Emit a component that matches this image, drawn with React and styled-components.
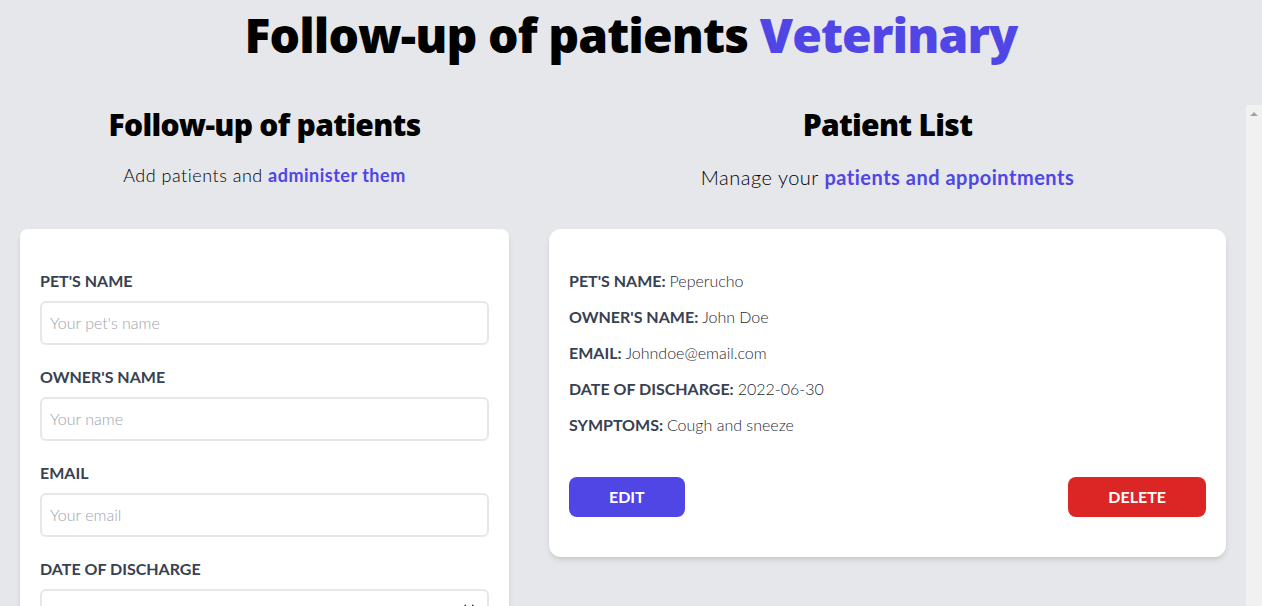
import React, { useState } from "react";
import styled, { createGlobalStyle } from "styled-components";

const GlobalStyle = createGlobalStyle`
	* {
		box-sizing: border-box;
	}

	html,
	body {
		margin: 0;
		padding: 0;
		height: 100%;
		overflow: hidden;
		background-color: #e5e7eb;
		font-family: Lato, "Liberation Sans", sans-serif;
	}
`;

const Page = styled.div`
	padding-top: 11px;
`;

const Title = styled.h1`
	margin: 0 auto;
	font-family: "Open Sans", Lato, sans-serif;
	font-size: 48px;
	line-height: 48px;
	font-weight: 800;
	letter-spacing: -0.9px;
	text-align: center;
	color: #000;
`;

const Accent = styled.span`
	color: #4f46e5;
	font-weight: ${props => (props.bold ? 700 : "inherit")};
`;

const Columns = styled.div`
	display: flex;
	margin-top: 46px;
`;

const FormColumn = styled.div`
	width: 529px;
	flex-shrink: 0;
`;

const ListColumn = styled.div`
	flex: 1;
	display: flex;
	height: 100vh;
`;

const ListBody = styled.div`
	flex: 1;
	min-width: 0;
`;

const ScrollTrack = styled.div`
	width: 16px;
	flex-shrink: 0;
	background-color: #f1f1f1;
	padding-top: 7px;
`;

const ArrowUp = styled.div`
	width: 0;
	height: 0;
	margin: 0 auto;
	border-left: 4px solid transparent;
	border-right: 4px solid transparent;
	border-bottom: 4px solid #a3a3a3;
`;

const Heading = styled.h2`
	margin: 0;
	padding-top: 2px;
	font-family: "Open Sans", Lato, sans-serif;
	font-size: 30px;
	line-height: 36px;
	font-weight: 800;
	letter-spacing: -0.7px;
	text-align: center;
	color: #000;
`;

const Subtitle = styled.p`
	margin: ${props => (props.large ? "20px 0 38px" : "18px 0 40px")};
	font-size: ${props => (props.large ? "20px" : "18px")};
	line-height: 28px;
	font-weight: 300;
	letter-spacing: 0.5px;
	text-align: center;
	color: #000;
`;

const Card = styled.div`
	margin: 0 20px 40px;
	padding: 40px 20px;
	background: #fff;
	border-radius: ${props => (props.round ? "12px" : "8px")};
	box-shadow: 0 4px 6px -1px rgba(0, 0, 0, 0.1),
		0 2px 4px -2px rgba(0, 0, 0, 0.1);
`;

const Field = styled.div`
	margin-bottom: 20px;
`;

const Label = styled.label`
	display: block;
	font-size: 16px;
	line-height: 24px;
	font-weight: 700;
	text-transform: uppercase;
	color: #374151;
`;

const Input = styled.input`
	display: block;
	width: 100%;
	margin-top: 8px;
	padding: 8px;
	border: 2px solid #e5e7eb;
	border-radius: 6px;
	font-family: inherit;
	font-size: 16px;
	line-height: 24px;
	font-weight: 300;
	color: #374151;
	outline: none;

	&::placeholder {
		color: #9ca3af;
	}
`;

const Line = styled.p`
	margin: 0 0 12px;
	font-size: 16px;
	line-height: 24px;
	font-weight: 700;
	text-transform: uppercase;
	color: #374151;
`;

const Value = styled.span`
	font-weight: 300;
	text-transform: none;
	color: #1f2937;
`;

const Actions = styled.div`
	display: flex;
	justify-content: space-between;
	margin-top: 40px;
`;

const Button = styled.button`
	padding: 8px 40px;
	border: none;
	border-radius: 8px;
	background-color: ${props => (props.danger ? "#dc2626" : "#4f46e5")};
	font-family: inherit;
	font-size: 16px;
	line-height: 24px;
	font-weight: 700;
	text-transform: uppercase;
	color: #fff;
	cursor: pointer;

	&:hover {
		background-color: ${props => (props.danger ? "#b91c1c" : "#4338ca")};
	}
`;

const patient = {
	pet: "Peperucho",
	owner: "John Doe",
	email: "Johndoe@email.com",
	date: "2022-06-30",
	symptoms: "Cough and sneeze"
};

const App = () => {
	const [form, setForm] = useState({
		pet: "",
		owner: "",
		email: "",
		date: ""
	});
	const onChange = e => {
		setForm({ ...form, [e.target.name]: e.target.value });
	};

	return (
		<Page>
			<GlobalStyle />
			<Title>
				Follow-up of patients <Accent>Veterinary</Accent>
			</Title>
			<Columns>
				<FormColumn>
					<Heading>Follow-up of patients</Heading>
					<Subtitle>
						Add patients and <Accent bold>administer them</Accent>
					</Subtitle>
					<Card as="form" onSubmit={e => e.preventDefault()}>
						<Field>
							<Label htmlFor="pet">Pet's name</Label>
							<Input
								id="pet"
								name="pet"
								type="text"
								placeholder="Your pet's name"
								value={form.pet}
								onChange={onChange}
							/>
						</Field>
						<Field>
							<Label htmlFor="owner">Owner's name</Label>
							<Input
								id="owner"
								name="owner"
								type="text"
								placeholder="Your name"
								value={form.owner}
								onChange={onChange}
							/>
						</Field>
						<Field>
							<Label htmlFor="email">Email</Label>
							<Input
								id="email"
								name="email"
								type="email"
								placeholder="Your email"
								value={form.email}
								onChange={onChange}
							/>
						</Field>
						<Field>
							<Label htmlFor="date">Date of discharge</Label>
							<Input
								id="date"
								name="date"
								type="date"
								value={form.date}
								onChange={onChange}
							/>
						</Field>
					</Card>
				</FormColumn>
				<ListColumn>
					<ListBody>
						<Heading>Patient List</Heading>
						<Subtitle large>
							Manage your <Accent bold>patients and appointments</Accent>
						</Subtitle>
						<Card round>
							<Line>
								Pet's name: <Value>{patient.pet}</Value>
							</Line>
							<Line>
								Owner's name: <Value>{patient.owner}</Value>
							</Line>
							<Line>
								Email: <Value>{patient.email}</Value>
							</Line>
							<Line>
								Date of discharge: <Value>{patient.date}</Value>
							</Line>
							<Line>
								Symptoms: <Value>{patient.symptoms}</Value>
							</Line>
							<Actions>
								<Button type="button">Edit</Button>
								<Button type="button" danger>
									Delete
								</Button>
							</Actions>
						</Card>
					</ListBody>
					<ScrollTrack>
						<ArrowUp />
					</ScrollTrack>
				</ListColumn>
			</Columns>
		</Page>
	);
};

export default App;
